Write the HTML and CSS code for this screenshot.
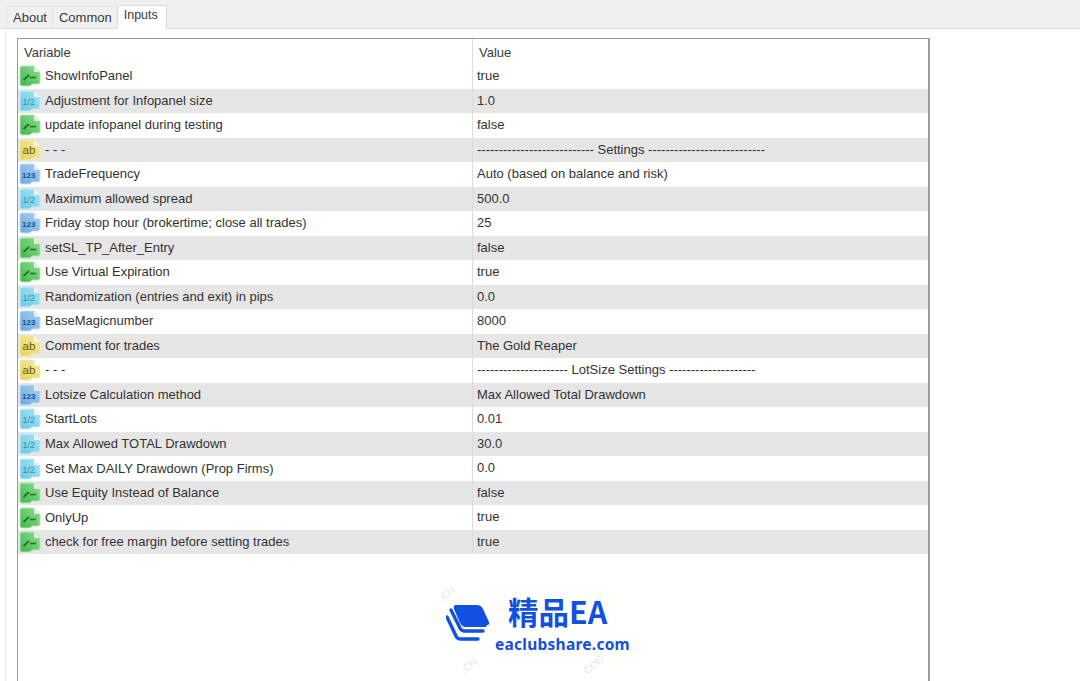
FILE: index.html
```html
<!DOCTYPE html>
<html lang="en">
<head>
  <meta charset="UTF-8">
  <title>Inputs</title>
  <link rel="stylesheet" href="styles.css">
</head>
<body>

<svg class="defs" width="0" height="0">
  <defs>
    <linearGradient id="g-bool" x1="0" y1="1" x2="1" y2="0">
      <stop offset="0" stop-color="#3fb64c"/>
      <stop offset="1" stop-color="#8fe08f"/>
    </linearGradient>
    <linearGradient id="g-double" x1="0" y1="1" x2="1" y2="0">
      <stop offset="0" stop-color="#6cc8e4"/>
      <stop offset="1" stop-color="#a8e6f2"/>
    </linearGradient>
    <linearGradient id="g-str" x1="0" y1="1" x2="1" y2="0">
      <stop offset="0" stop-color="#e6d355"/>
      <stop offset="1" stop-color="#f6ec9e"/>
    </linearGradient>
    <linearGradient id="g-int" x1="0" y1="1" x2="1" y2="0">
      <stop offset="0" stop-color="#6aa9e0"/>
      <stop offset="1" stop-color="#a9d0f0"/>
    </linearGradient>
    <symbol id="ic-bool" viewBox="0 0 22 22">
      <path d="M3 1H15L21 7V17Q21 19 19 19H13L11 21H3Q1 21 1 19V3Q1 1 3 1Z" fill="url(#g-bool)" stroke="#b5e6b5"/>
      <path d="M15 1V7H21Z" fill="#dcf5dc"/>
      <path d="M4.5 15L10 10" fill="none" stroke="#1d7a2c" stroke-width="2"/>
      <path d="M11 12.5H17" fill="none" stroke="#1d7a2c" stroke-width="1.6"/>
    </symbol>
    <symbol id="ic-double" viewBox="0 0 22 22">
      <path d="M3 1H15L21 7V17Q21 19 19 19H13L11 21H3Q1 21 1 19V3Q1 1 3 1Z" fill="url(#g-double)" stroke="#c5ecf5"/>
      <path d="M15 1V7H21Z" fill="#e6f8fb"/>
      <text class="ic-text ic-light" x="3.5" y="14.5" font-size="9" fill="#2a8fb0">1/2</text>
    </symbol>
    <symbol id="ic-str" viewBox="0 0 22 22">
      <path d="M3 1H15L21 7V17Q21 19 19 19H13L11 21H3Q1 21 1 19V3Q1 1 3 1Z" fill="url(#g-str)" stroke="#f0e9b4"/>
      <path d="M15 1V7H21Z" fill="#fbf8da"/>
      <text class="ic-text ic-light" x="3.5" y="15" font-size="11.5" fill="#6b5a10">ab</text>
    </symbol>
    <symbol id="ic-int" viewBox="0 0 22 22">
      <path d="M3 1H15L21 7V17Q21 19 19 19H13L11 21H3Q1 21 1 19V3Q1 1 3 1Z" fill="url(#g-int)" stroke="#c5def2"/>
      <path d="M15 1V7H21Z" fill="#e2eff9"/>
      <text class="ic-text" x="3" y="14.5" font-size="8" fill="#1a4f8f">123</text>
    </symbol>
  </defs>
</svg>

<div class="tabbar">
  <span class="tab">About</span>
  <span class="tab">Common</span>
  <span class="tab active">Inputs</span>
</div>

<div class="content">
  <div class="grid">
    <div class="head">
      <div class="col-var">Variable</div>
      <div class="col-val">Value</div>
    </div>

    <div class="row"><div class="var"><svg class="icon"><use href="#ic-bool"/></svg>ShowInfoPanel</div><div class="val">true</div></div>
    <div class="row"><div class="var"><svg class="icon"><use href="#ic-double"/></svg>Adjustment for Infopanel size</div><div class="val">1.0</div></div>
    <div class="row"><div class="var"><svg class="icon"><use href="#ic-bool"/></svg>update infopanel during testing</div><div class="val">false</div></div>
    <div class="row"><div class="var"><svg class="icon"><use href="#ic-str"/></svg>- - -</div><div class="val">--------------------------- Settings ---------------------------</div></div>
    <div class="row"><div class="var"><svg class="icon"><use href="#ic-int"/></svg>TradeFrequency</div><div class="val">Auto (based on balance and risk)</div></div>
    <div class="row"><div class="var"><svg class="icon"><use href="#ic-double"/></svg>Maximum allowed spread</div><div class="val">500.0</div></div>
    <div class="row"><div class="var"><svg class="icon"><use href="#ic-int"/></svg>Friday stop hour (brokertime; close all trades)</div><div class="val">25</div></div>
    <div class="row"><div class="var"><svg class="icon"><use href="#ic-bool"/></svg>setSL_TP_After_Entry</div><div class="val">false</div></div>
    <div class="row"><div class="var"><svg class="icon"><use href="#ic-bool"/></svg>Use Virtual Expiration</div><div class="val">true</div></div>
    <div class="row"><div class="var"><svg class="icon"><use href="#ic-double"/></svg>Randomization (entries and exit) in pips</div><div class="val">0.0</div></div>
    <div class="row"><div class="var"><svg class="icon"><use href="#ic-int"/></svg>BaseMagicnumber</div><div class="val">8000</div></div>
    <div class="row"><div class="var"><svg class="icon"><use href="#ic-str"/></svg>Comment for trades</div><div class="val">The Gold Reaper</div></div>
    <div class="row"><div class="var"><svg class="icon"><use href="#ic-str"/></svg>- - -</div><div class="val">--------------------- LotSize Settings --------------------</div></div>
    <div class="row"><div class="var"><svg class="icon"><use href="#ic-int"/></svg>Lotsize Calculation method</div><div class="val">Max Allowed Total Drawdown</div></div>
    <div class="row"><div class="var"><svg class="icon"><use href="#ic-double"/></svg>StartLots</div><div class="val">0.01</div></div>
    <div class="row"><div class="var"><svg class="icon"><use href="#ic-double"/></svg>Max Allowed TOTAL Drawdown</div><div class="val">30.0</div></div>
    <div class="row"><div class="var"><svg class="icon"><use href="#ic-double"/></svg>Set Max DAILY Drawdown (Prop Firms)</div><div class="val">0.0</div></div>
    <div class="row"><div class="var"><svg class="icon"><use href="#ic-bool"/></svg>Use Equity Instead of Balance</div><div class="val">false</div></div>
    <div class="row"><div class="var"><svg class="icon"><use href="#ic-bool"/></svg>OnlyUp</div><div class="val">true</div></div>
    <div class="row"><div class="var"><svg class="icon"><use href="#ic-bool"/></svg>check for free margin before setting trades</div><div class="val">true</div></div>

    <div class="logo">
      <svg class="logo-mark" viewBox="0 0 44 44">
        <path d="M10 2H31Q35 2 37 6L43 19Q44 22 41 22L40 24H20Q16 24 14 20L8 6Q7 2 10 2Z" fill="#1250e0" transform="translate(0 2)"/>
        <path d="M5 9L14 27Q15 30 19 30H37" fill="none" stroke="#1250e0" stroke-width="3.4" stroke-linecap="round"/>
        <path d="M1 16L10 35Q11 38 15 38H32" fill="none" stroke="#1250e0" stroke-width="3.4" stroke-linecap="round"/>
      </svg>
      <div class="logo-text">
        <div class="logo-title">精品EA</div>
        <div class="logo-url">eaclubshare.com</div>
      </div>
      <span class="mark mark-a">.CN</span>
      <span class="mark mark-b">.CN</span>
      <span class="mark mark-c">.COO</span>
    </div>
  </div>
</div>

</body>
</html>
```

FILE: styles.css
```css
html, body {
  margin: 0;
  height: 100%;
  overflow: hidden;
}
body {
  font-family: "Liberation Sans", Arial, sans-serif;
  font-size: 13px;
  color: #333;
  background: #fff;
}
.defs {
  display: block;
  height: 0;
}
.ic-text {
  font-family: "Liberation Sans", Arial, sans-serif;
  font-weight: bold;
}
.ic-light {
  font-weight: normal;
}

.tabbar {
  display: flex;
  align-items: flex-end;
  height: 29px;
  padding-left: 6px;
  background: #f0f0f0;
  border-bottom: 1px solid #e0e0e0;
  box-sizing: border-box;
}
.tab {
  height: 21px;
  line-height: 21px;
  padding: 0 5px 0 6px;
  border: 1px solid #e6e6e6;
  border-bottom: none;
  margin-right: -1px;
  color: #3a3a3a;
  font-size: 13px;
}
.tab.active {
  height: 23px;
  line-height: 19px;
  margin-bottom: -1px;
  padding: 0 8px 0 6px;
  background: #fff;
  border-color: #dcdcdc;
  font-size: 12.5px;
}

.content {
  margin-left: 5px;
  padding: 9px 0 0 11px;
  border-left: 1px solid #ececec;
}
.grid {
  width: 913px;
  height: 700px;
  border: 1px solid #9a9a9a;
  border-right-width: 2px;
  box-sizing: border-box;
  background: #fffffd;
}
.head, .row {
  display: grid;
  grid-template-columns: 455px 1fr;
}
.head {
  height: 25px;
  line-height: 27px;
  color: #3c3c3c;
}
.col-var {
  padding-left: 6px;
  border-right: 1px solid #dcdcdc;
}
.col-val {
  padding-left: 6px;
}
.row {
  height: 24.53px;
  line-height: 24px;
  box-sizing: border-box;
}
.row:nth-child(odd) {
  background: #e6e6e6;
}
.var {
  display: flex;
  align-items: center;
  gap: 4px;
  padding-left: 1px;
  border-right: 1px solid #dcdcdc;
  white-space: nowrap;
}
.val {
  padding-left: 4px;
  white-space: nowrap;
}
.icon {
  width: 22px;
  height: 22px;
  flex: none;
}

.logo {
  position: relative;
  display: flex;
  align-items: flex-start;
  gap: 5px;
  margin: 38px 0 0 428px;
  height: 70px;
}
.logo-mark {
  width: 44px;
  height: 44px;
  margin-top: 9px;
}
.logo-title {
  font-family: "Noto Sans CJK SC", "Noto Sans", sans-serif;
  font-weight: 700;
  font-size: 30.5px;
  line-height: 38px;
  color: #1250e0;
  padding-left: 13px;
}
.logo-url {
  font-family: "Noto Sans", sans-serif;
  font-weight: 700;
  font-size: 15.5px;
  line-height: 20px;
  margin-top: 4px;
  color: #1250e0;
  letter-spacing: 0.25px;
}
.mark {
  position: absolute;
  font-size: 10px;
  color: #e6e6e6;
  transform: rotate(-40deg);
}
.mark-a { left: -8px; top: -4px; }
.mark-b { left: 14px; top: 68px; }
.mark-c { left: 134px; top: 68px; }
```
